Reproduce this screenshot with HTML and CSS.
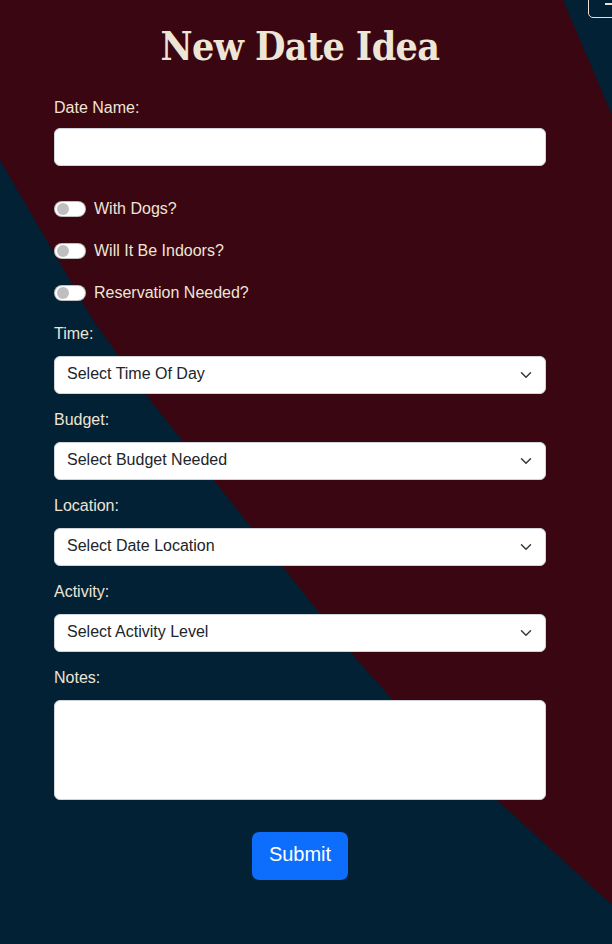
FILE: index.html
```html
<!DOCTYPE html>
<html lang="en">
<head>
<meta charset="utf-8">
<title>New Date Idea</title>
<link rel="stylesheet" href="styles.css">
</head>
<body>
<svg class="bg" viewBox="0 0 612 944" preserveAspectRatio="none" aria-hidden="true">
  <rect width="612" height="944" fill="#022135"/>
  <path d="M0,0 L563,0 L612,115 L612,905 L497,800 L393,700 L357,660 L150,400 L93,320 L0,160 Z" fill="#3a0611"/>
</svg>
<button class="toggler" type="button" aria-label="menu"><span class="toggler-line"></span></button>
<main class="page">
  <h1 class="title">New Date Idea</h1>
  <form class="form">
    <div class="group">
      <label class="label">Date Name:</label>
      <input class="control" type="text">
    </div>
    <div class="switches">
      <label class="switch"><span class="track"><span class="knob"></span></span>With Dogs?</label>
      <label class="switch"><span class="track"><span class="knob"></span></span>Will It Be Indoors?</label>
      <label class="switch"><span class="track"><span class="knob"></span></span>Reservation Needed?</label>
    </div>
    <div class="group">
      <label class="label">Time:</label>
      <div class="select-wrap">
        <select class="control select"><option>Select Time Of Day</option></select>
        <svg class="chev" viewBox="0 0 16 16"><path d="M2 5l6 6 6-6" fill="none" stroke="#343a40" stroke-width="2" stroke-linecap="round" stroke-linejoin="round"/></svg>
      </div>
    </div>
    <div class="group">
      <label class="label">Budget:</label>
      <div class="select-wrap">
        <select class="control select"><option>Select Budget Needed</option></select>
        <svg class="chev" viewBox="0 0 16 16"><path d="M2 5l6 6 6-6" fill="none" stroke="#343a40" stroke-width="2" stroke-linecap="round" stroke-linejoin="round"/></svg>
      </div>
    </div>
    <div class="group">
      <label class="label">Location:</label>
      <div class="select-wrap">
        <select class="control select"><option>Select Date Location</option></select>
        <svg class="chev" viewBox="0 0 16 16"><path d="M2 5l6 6 6-6" fill="none" stroke="#343a40" stroke-width="2" stroke-linecap="round" stroke-linejoin="round"/></svg>
      </div>
    </div>
    <div class="group">
      <label class="label">Activity:</label>
      <div class="select-wrap">
        <select class="control select"><option>Select Activity Level</option></select>
        <svg class="chev" viewBox="0 0 16 16"><path d="M2 5l6 6 6-6" fill="none" stroke="#343a40" stroke-width="2" stroke-linecap="round" stroke-linejoin="round"/></svg>
      </div>
    </div>
    <div class="group">
      <label class="label">Notes:</label>
      <textarea class="control notes"></textarea>
    </div>
    <div class="actions">
      <button class="submit" type="button">Submit</button>
    </div>
  </form>
</main>
</body>
</html>
```
FILE: styles.css
```css
html, body {
  margin: 0;
  padding: 0;
}
body {
  width: 612px;
  height: 944px;
  overflow: hidden;
  position: relative;
  background: #022135;
  font-family: "Liberation Sans", Arial, sans-serif;
  font-size: 16px;
  color: #eee5d6;
}
.bg {
  position: absolute;
  left: 0;
  top: 0;
  width: 612px;
  height: 944px;
  z-index: 0;
}
.toggler {
  position: absolute;
  left: 588px;
  top: -20px;
  width: 44px;
  height: 38px;
  border: 1px solid #e9e2d4;
  border-radius: 5px;
  background: transparent;
  padding: 0;
  z-index: 2;
}
.toggler-line {
  position: absolute;
  left: 16px;
  top: 22px;
  width: 20px;
  height: 2px;
  background: #e9e2d4;
}
.page {
  position: relative;
  z-index: 1;
  width: 492px;
  margin-left: 54px;
  padding-top: 20px;
}
.title {
  margin: 0;
  text-align: center;
  font-family: "DejaVu Serif Condensed", "DejaVu Serif", serif;
  font-weight: 900;
  font-size: 39px;
  line-height: 52px;
  color: #ede6d6;
  letter-spacing: -0.6px;
}
.form {
  display: flex;
  flex-direction: column;
  margin-top: 22px;
}
.group {
  display: flex;
  flex-direction: column;
  margin-bottom: 14px;
}
.label {
  line-height: 24px;
  margin-bottom: 10px;
}
.group:first-child .label {
  position: relative;
  top: 2px;
}
.control {
  box-sizing: border-box;
  width: 100%;
  height: 38px;
  border: 1px solid #ced4da;
  border-radius: 6px;
  background: #fff;
  font-family: inherit;
  font-size: 16px;
  color: #212529;
  margin: 0;
  padding: 6px 12px;
}
.select-wrap {
  position: relative;
}
.select {
  appearance: none;
  -webkit-appearance: none;
  outline: none;
  padding: 3px 12px 7px;
}
.chev {
  position: absolute;
  right: 14px;
  top: 13px;
  width: 12px;
  height: 12px;
  pointer-events: none;
}
.switches {
  display: flex;
  flex-direction: column;
  gap: 18px;
  margin-top: 17px;
  margin-bottom: 17px;
}
.switch {
  display: flex;
  align-items: center;
  height: 24px;
  line-height: 24px;
}
.track {
  box-sizing: border-box;
  width: 32px;
  height: 16px;
  border-radius: 8px;
  background: #fff;
  border: 1px solid rgba(0, 0, 0, 0.25);
  margin-right: 8px;
  display: flex;
  align-items: center;
  padding-left: 2px;
}
.knob {
  width: 12px;
  height: 12px;
  border-radius: 50%;
  background: #bfbfbf;
}
.notes {
  height: 100px;
  resize: none;
}
.actions {
  display: flex;
  justify-content: center;
  margin-top: 18px;
}
.submit {
  width: 96px;
  height: 48px;
  border: none;
  border-radius: 7px;
  background: #0d6efd;
  color: #fff;
  font-family: inherit;
  font-size: 20px;
  padding: 0 0 3px;
}
```
